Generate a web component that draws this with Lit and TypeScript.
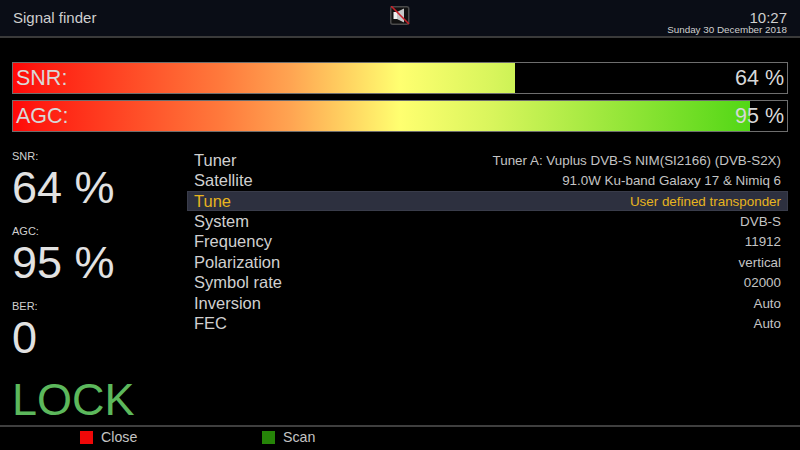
import { LitElement, html, css } from "lit";
import { customElement } from "lit/decorators.js";

const rows: [string, string][] = [
  ["Tuner", "Tuner A: Vuplus DVB-S NIM(SI2166) (DVB-S2X)"],
  ["Satellite", "91.0W Ku-band Galaxy 17 & Nimiq 6"],
  ["Tune", "User defined transponder"],
  ["System", "DVB-S"],
  ["Frequency", "11912"],
  ["Polarization", "vertical"],
  ["Symbol rate", "02000"],
  ["Inversion", "Auto"],
  ["FEC", "Auto"],
];

@customElement("app-root")
export class AppRoot extends LitElement {
  static styles = css`
    :host {
      display: flex;
      flex-direction: column;
      width: 800px;
      height: 450px;
      background: #000;
      color: #d8d8d8;
      font-family: "Liberation Sans", Arial, sans-serif;
      overflow: hidden;
    }
    .header {
      height: 36px;
      flex: none;
      background: #0a0d16;
      border-bottom: 2px solid #3a3a3a;
      display: flex;
      justify-content: space-between;
      padding: 0 13px 0 13px;
      position: relative;
    }
    .title { font-size: 15px; line-height: 36px; color: #cfcfcf; }
    .mute { position: absolute; left: 390px; top: 6px; width: 20px; height: 19px; }
    .clock { text-align: right; color: #cfcfcf; padding-top: 11px; }
    .time { font-size: 15px; line-height: 14px; }
    .date { font-size: 9.85px; line-height: 10px; }
    .bars {
      margin: 24px 12px 0;
      display: flex;
      flex-direction: column;
      gap: 6px;
    }
    .bar {
      position: relative;
      height: 30px;
      border: 1px solid #6e6e6e;
      font-size: 21.5px;
      line-height: 30px;
      color: #d8d8d8;
    }
    .fill {
      height: 100%;
      background: linear-gradient(90deg, #ff0808 0, #ff1a10 3%, #ff7a3c 27%, #ffa552 36%, #ffff70 50%, #d8f55c 62%, #4fd614 96%) 0 0 / 774px 100% no-repeat;
    }
    .bar-label { position: absolute; left: 3px; top: 0; }
    .bar-value { position: absolute; right: 3px; top: 0; }
    .main {
      display: flex;
      flex: 1;
      min-height: 0;
      margin-top: 18px;
      padding: 0 12px;
    }
    .left { width: 175px; flex: none; }
    .stat-label { font-size: 11px; line-height: 13px; color: #d0d0d0; }
    .stat-value { font-size: 45px; line-height: 50px; margin-bottom: 12px; color: #e2e2e2; }
    .lock { font-size: 45px; line-height: 50px; color: #5cb85c; margin-top: 8px; }
    .list { flex: 1; font-size: 16.5px; }
    .row {
      display: flex;
      justify-content: space-between;
      align-items: center;
      height: 20.45px;
      padding: 0 7px;
      color: #d0d0d0;
    }
    .row .val { font-size: 13.4px; color: #c4c4c4; }
    .row.sel {
      background: #2d303f;
      box-shadow: inset 0 0 0 1px #393c4a;
      color: #e8b41e;
    }
    .row.sel .val { color: #e8b41e; }
    .footer {
      height: 20px;
      padding: 0 0 3px 80px;
      flex: none;
      border-top: 2px solid #3f3f3f;
      display: flex;
      align-items: center;
      font-size: 14.2px;
      color: #c4c4c4;
    }
    .key { display: flex; align-items: center; gap: 8px; width: 182px; }
    .swatch { width: 13px; height: 13px; }
    .red { background: #f00808; }
    .green { background: #268508; }
  `;

  private bar(label: string, value: number, px: number) {
    return html`<div class="bar">
      <div class="fill" style="width:${px}px"></div>
      <span class="bar-label">${label}</span>
      <span class="bar-value">${value} %</span>
    </div>`;
  }

  render() {
    return html`
      <div class="header">
        <div class="title">Signal finder</div>
        <svg class="mute" viewBox="0 0 20 19">
          <rect x="0.75" y="0.75" width="18" height="17.5" rx="2" fill="#111" stroke="#4a4a4a" stroke-width="1.5" />
          <path d="M3.5 6h3.5v7H3.5z" fill="#f0f0f0" />
          <path d="M7 6l7-3.5v14L7 13z" fill="#c8c8c8" />
          <path d="M1 0l18 18" stroke="#c8202a" stroke-width="1.6" />
        </svg>
        <div class="clock">
          <div class="time">10:27</div>
          <div class="date">Sunday 30 December 2018</div>
        </div>
      </div>
      <div class="bars">
        ${this.bar("SNR:", 64, 502)}
        ${this.bar("AGC:", 95, 737)}
      </div>
      <div class="main">
        <div class="left">
          <div class="stat-label">SNR:</div>
          <div class="stat-value">64 %</div>
          <div class="stat-label">AGC:</div>
          <div class="stat-value">95 %</div>
          <div class="stat-label">BER:</div>
          <div class="stat-value">0</div>
          <div class="lock">LOCK</div>
        </div>
        <div class="list">
          ${rows.map(
            ([k, v]) => html`<div class="row ${k === "Tune" ? "sel" : ""}">
              <span>${k}</span><span class="val">${v}</span>
            </div>`
          )}
        </div>
      </div>
      <div class="footer">
        <div class="key"><span class="swatch red"></span>Close</div>
        <div class="key"><span class="swatch green"></span>Scan</div>
      </div>
    `;
  }
}
